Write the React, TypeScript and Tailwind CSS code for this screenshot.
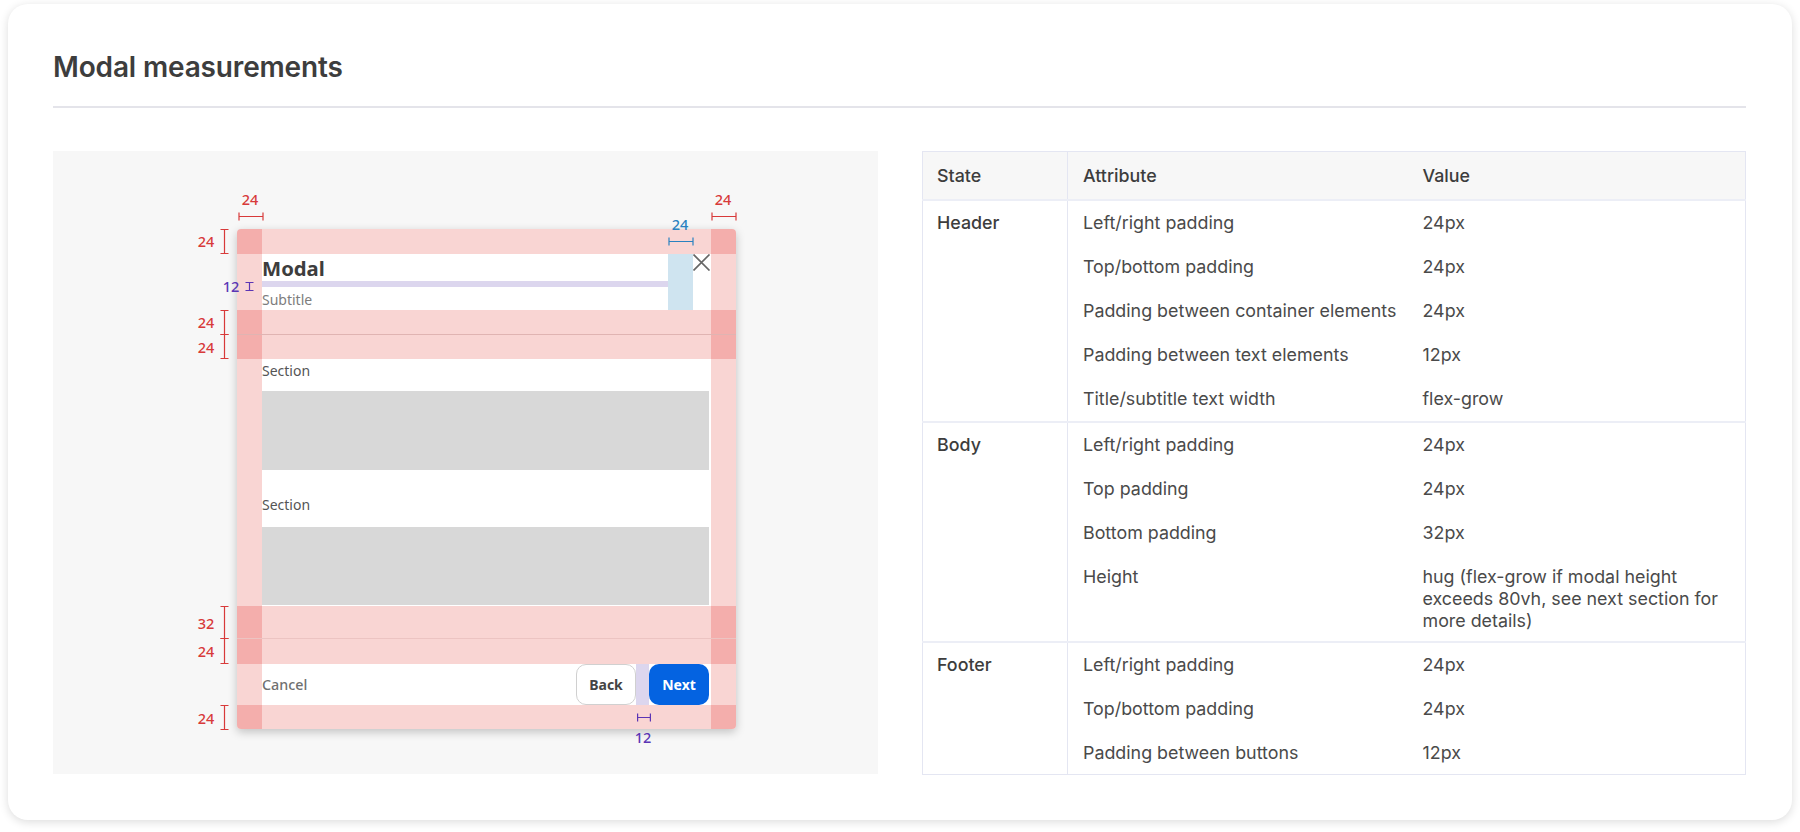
import React from "react";

const noto = "font-['Noto_Sans','Open_Sans',sans-serif]";

function HBar({ className, color }: { className: string; color: string }) {
  return (
    <svg className={"absolute " + className} width="26" height="9" viewBox="0 0 26 9" fill="none" stroke={color} strokeWidth="1.2">
      <path d="M1 0.5V8.5M25 0.5V8.5M1 4.5H25" />
    </svg>
  );
}

function VBar({ className, h }: { className: string; h: number }) {
  return (
    <svg className={"absolute " + className} width="9" height={h} viewBox={`0 0 9 ${h}`} fill="none" stroke="#d83a3a" strokeWidth="1.2">
      <path d={`M4.5 0.5V${h - 0.5}M0.5 0.5H8.5M0.5 ${h - 0.5}H8.5`} />
    </svg>
  );
}

function Label({ className, children }: { className: string; children: React.ReactNode }) {
  return (
    <span className={"absolute w-6 text-center text-[14.5px] leading-5 font-medium " + noto + " " + className}>{children}</span>
  );
}

function Band({ className = "" }: { className?: string }) {
  return (
    <div className={"flex shrink-0 " + className}>
      <div className="w-[25px] bg-[#f4aeac]" />
      <div className="flex-1 bg-[#f9d5d3]" />
      <div className="w-[25px] bg-[#f4aeac]" />
    </div>
  );
}

function Row({ className, children }: { className: string; children: React.ReactNode }) {
  return (
    <div className={"flex shrink-0 " + className}>
      <div className="w-[25px] bg-[#f9d5d3]" />
      <div className="flex-1 min-w-0 bg-white">{children}</div>
      <div className="w-[25px] bg-[#f9d5d3]" />
    </div>
  );
}

function Modal() {
  return (
    <div className="relative w-[499px] h-[500px] ml-[184px] mt-[78px] shadow-[0_3px_10px_rgba(0,0,0,0.22)] rounded-[4px]">
      <div className="flex flex-col h-full rounded-[4px] overflow-hidden">
        <Band className="h-[25px]" />
        <Row className="h-[56px]">
          <div className="flex h-full">
            <div className="w-[406px] flex flex-col">
              <div className={"pt-[1px] h-[27px] text-[20.3px] leading-[27px] font-bold text-[#3d3d3d] " + noto}>Modal</div>
              <div className="h-[9px] bg-[#dcd6ee]" />
              <div className={"pt-[3px] text-[14px] leading-5 text-[#7d7d7d] " + noto}>Subtitle</div>
            </div>
            <div className="w-[25px] bg-[#cfe4f0]" />
            <svg width="18" height="17" viewBox="0 0 18 17" fill="none" stroke="#666666" strokeWidth="1.7">
              <path d="M0.5 0.5L16.5 16.5M16.5 0.5L0.5 16.5" />
            </svg>
          </div>
        </Row>
        <Band className="h-[24px]" />
        <Band className="h-[25px] border-t border-[#e0b4b2]" />
        <Row className="h-[247px]">
          <div className={"flex flex-col pr-[2px] text-[14px] leading-5 text-[#555555] " + noto}>
            <div className="pt-[2px] pb-[10px]">Section</div>
            <div className="h-[78.5px] bg-[#d8d8d8]" />
            <div className="pt-[25.5px] pb-[12px]">Section</div>
            <div className="h-[78px] bg-[#d8d8d8]" />
          </div>
        </Row>
        <Band className="h-[32px]" />
        <Band className="h-[26px] border-t border-[#ecc4c2]" />
        <Row className="h-[41px]">
          <div className={"flex items-center h-full pr-[2px] text-[14px] " + noto}>
            <span className="flex-1 text-[#707070] font-medium text-[14.3px]">Cancel</span>
            <button className="w-[60px] h-[41px] rounded-[10px] border border-[#d0d0d0] bg-white font-bold text-[#444444]">Back</button>
            <div className="w-[13px] h-full bg-[#dcd6ee]" />
            <button className="w-[60px] h-[41px] rounded-[10px] bg-[#0463e1] font-bold text-white">Next</button>
          </div>
        </Row>
        <Band className="h-[24px]" />
      </div>

      {/* measurement annotations */}
      <Label className="left-[1px] top-[-40px] text-[#d83a3a]">24</Label>
      <HBar className="left-[1px] top-[-17px]" color="#d83a3a" />
      <Label className="left-[474px] top-[-40px] text-[#d83a3a]">24</Label>
      <HBar className="left-[474px] top-[-17px]" color="#d83a3a" />
      <Label className="left-[431px] top-[-15px] text-[#2a82c0]">24</Label>
      <HBar className="left-[431px] top-[7.5px]" color="#2a82c0" />

      <Label className="left-[-43px] top-[2px] text-[#d83a3a]">24</Label>
      <VBar className="left-[-17px] top-0" h={25} />
      <Label className="left-[-18px] top-[47px] text-[#5b35b5]">12</Label>
      <svg className="absolute left-[8px] top-[53px]" width="9" height="9" viewBox="0 0 9 9" fill="none" stroke="#5b35b5" strokeWidth="1.2">
        <path d="M4.5 0.5V8.5M0.5 0.5H8.5M0.5 8.5H8.5" />
      </svg>
      <Label className="left-[-43px] top-[83px] text-[#d83a3a]">24</Label>
      <VBar className="left-[-17px] top-[81px]" h={25} />
      <Label className="left-[-43px] top-[108px] text-[#d83a3a]">24</Label>
      <VBar className="left-[-17px] top-[105px]" h={25} />
      <Label className="left-[-43px] top-[384px] text-[#d83a3a]">32</Label>
      <VBar className="left-[-17px] top-[377px]" h={33} />
      <Label className="left-[-43px] top-[412px] text-[#d83a3a]">24</Label>
      <VBar className="left-[-17px] top-[409px]" h={26} />
      <Label className="left-[-43px] top-[479px] text-[#d83a3a]">24</Label>
      <VBar className="left-[-17px] top-[476px]" h={25} />

      <svg className="absolute left-[400px] top-[484px]" width="14" height="9" viewBox="0 0 14 9" fill="none" stroke="#5b35b5" strokeWidth="1.2">
        <path d="M0.6 0.5V8.5M13.4 0.5V8.5M0.6 4.5H13.4" />
      </svg>
      <Label className="left-[394px] top-[498px] text-[#5b35b5]">12</Label>
    </div>
  );
}

const groups: { state: string; rows: [string, string, string][] }[] = [
  {
    state: "Header",
    rows: [
      ["Left/right padding", "24px", "pb-[11px]"],
      ["Top/bottom padding", "24px", "pb-[11px]"],
      ["Padding between container elements", "24px", "pb-[11px]"],
      ["Padding between text elements", "12px", "pb-[11px]"],
      ["Title/subtitle text width", "flex-grow", "pb-[11px]"],
    ],
  },
  {
    state: "Body",
    rows: [
      ["Left/right padding", "24px", "pb-[11px]"],
      ["Top padding", "24px", "pb-[11px]"],
      ["Bottom padding", "32px", "pb-[11px]"],
      ["Height", "hug (flex-grow if modal height exceeds 80vh, see next section for more details)", "pb-[9px]"],
    ],
  },
  {
    state: "Footer",
    rows: [
      ["Left/right padding", "24px", "pb-[11px]"],
      ["Top/bottom padding", "24px", "pb-[11px]"],
      ["Padding between buttons", "12px", "pb-[10px]"],
    ],
  },
];

function Spec() {
  return (
    <table className="w-[823px] table-fixed border-collapse border border-[#e4e6f2] text-[17.85px] leading-[22px] text-[#4a4a4a] align-top">
      <colgroup>
        <col className="w-[145px]" />
        <col className="w-[339px]" />
        <col className="w-[339px]" />
      </colgroup>
      <thead>
        <tr className="h-[48px] bg-[#f7f7f7] border-b-2 border-[#eceef6] font-medium text-[#3d3d3d]">
          <th className="px-[14px] pt-[2px] text-left font-medium border-r border-[#e4e6f2]">State</th>
          <th className="pl-[15px] pr-0 pt-[2px] text-left font-medium">Attribute</th>
          <th className="px-[16px] pt-[2px] text-left font-medium">Value</th>
        </tr>
      </thead>
      {groups.map((g) => (
        <tbody key={g.state} className="border-b-2 border-[#eceef6] last:border-b-0">
          {g.rows.map(([a, v, pad], i) => (
            <tr key={a}>
              {i === 0 && (
                <td rowSpan={g.rows.length} className="px-[14px] pt-[11px] align-top font-medium text-[#3d3d3d] border-r border-[#e4e6f2]">
                  {g.state}
                </td>
              )}
              <td className={"pl-[15px] pr-0 pt-[11px] align-top " + pad}>{a}</td>
              <td className={"px-[16px] pt-[11px] align-top " + pad}>{v}</td>
            </tr>
          ))}
        </tbody>
      ))}
    </table>
  );
}

export default function App() {
  return (
    <div className="w-[1800px] h-[832px] overflow-hidden bg-white pt-[4px] px-[8px] font-['Inter',sans-serif]">
      <div className="w-[1784px] h-[816px] rounded-[20px] bg-white shadow-[0_2px_10px_rgba(0,0,0,0.14)] px-[45px] pt-[47px]">
        <h1 className="text-[28px] leading-[32px] font-semibold text-[#3d3d3d] tracking-[-0.15px]">Modal measurements</h1>
        <div className="mt-[23px] h-[2px] w-[1693px] bg-[#e4e4ea]" />
        <div className="mt-[43px] flex gap-[44px]">
          <div className="w-[825px] h-[623px] bg-[#f7f7f7] overflow-hidden flow-root">
            <Modal />
          </div>
          <Spec />
        </div>
      </div>
    </div>
  );
}
